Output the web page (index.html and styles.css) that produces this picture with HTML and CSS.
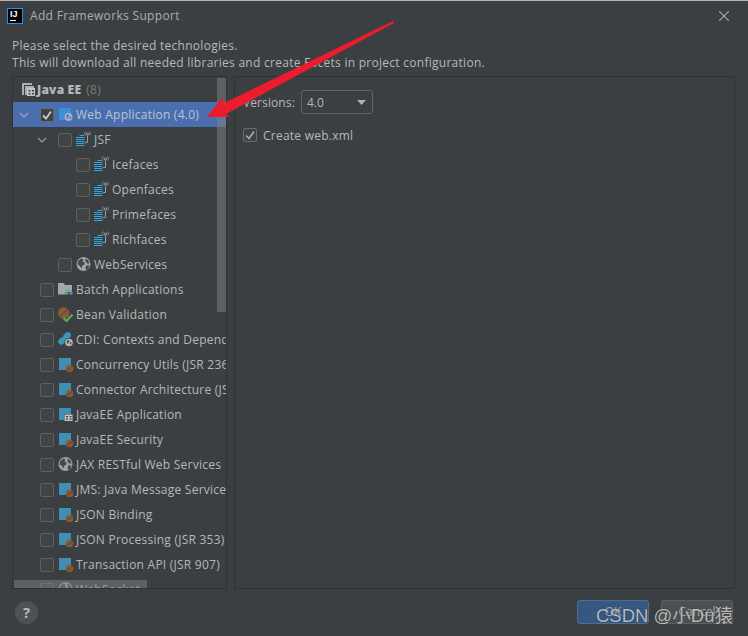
FILE: index.html
```html
<!DOCTYPE html>
<html lang="en">
<head>
<meta charset="utf-8">
<title>Add Frameworks Support</title>
<link rel="stylesheet" href="styles.css">
</head>
<body>
<svg class="defs" width="0" height="0" aria-hidden="true">
  <symbol id="jsf" viewBox="0 0 16 16">
    <path d="M0 6.500h8.500M0 8.500h8.500M0 10.500h8.500M0 12.500h8.500M0 14.500h8.500" stroke="#2fa7e0" stroke-width="1"/>
    <path d="M3.500 4.500h4.500" stroke="#2fa7e0" stroke-width="1"/>
    <path d="M11.500 4.500v7M11.500 11.500H9" fill="none" stroke="#a4a8aa" stroke-width=".9"/>
    <circle cx="11.500" cy="3" r="1.100" fill="none" stroke="#b0b4b6" stroke-width=".8"/>
    <path d="M9.300 4.500a3 3 0 0 1 0-4M13.700 4.500a3 3 0 0 0 0-4" fill="none" stroke="#9aa0a3" stroke-width=".8"/>
  </symbol>
  <symbol id="globe" viewBox="0 0 16 16">
    <circle cx="7.500" cy="8" r="7" fill="#9ea3a6"/>
    <path d="M2.500 4.500l3-2 2 1-1 2 2 1 0 2-2 1-1 3-2-3-2-1zM9.500 2.500l3 2 1 3-2 0-2-2zM10.500 9.500l3 0-1 3-2 2-1-3z" fill="#44484b"/>
  </symbol>
  <symbol id="bean" viewBox="0 0 16 16">
    <path d="M1 2h12v12H1z" fill="#3f8fb5"/>
    <circle cx="11.500" cy="12.500" r="3.800" fill="#8a5a32"/>
    <path d="M8.800 14.500l5.400-4" stroke="#3c3f41" stroke-width=".9"/>
  </symbol>
  <symbol id="appicon" viewBox="0 0 16 16">
    <path d="M1 2h12v12H1z" fill="#3f8fb5"/>
    <path d="M6 8h9v7.500H6z" fill="#3c3f41"/>
    <path d="M6.500 8.500h8V15h-8z" fill="#c2c6c8"/>
    <path d="M8 10h2v1.200H8zM11.500 10h2v1.200h-2zM8 12.500h2v1.200H8zM11.500 12.500h2v1.200h-2z" fill="#3c3f41"/>
  </symbol>
  <symbol id="webapp" viewBox="0 0 16 16">
    <path d="M1 2h12v12H1z" fill="#3a92d2"/>
    <circle cx="10.500" cy="11" r="4" fill="#9fb0c8"/>
    <path d="M8.500 9l2-.5 .5 1.500-1 1-.5 2-1-1.500zM12 10.500l1.300 .5-1 2-1-.5z" fill="#4b6eaf"/>
  </symbol>
  <symbol id="batch" viewBox="0 0 16 16">
    <path d="M0 2h5.500l1.500 2h7v5.500H7v4H0z" fill="#9ea9b0"/>
    <path d="M7 9.500h7V11H7z" fill="#9ea9b0"/>
    <circle cx="8.700" cy="12.200" r="1.700" fill="#57a55a"/>
    <circle cx="13" cy="12.200" r="1.700" fill="#3f93b8"/>
  </symbol>
  <symbol id="valid" viewBox="0 0 16 16">
    <circle cx="5.700" cy="7" r="5.800" fill="#8a5a32"/>
    <path d="M1.500 11L9.500 3" stroke="#3c3f41" stroke-width="1"/>
    <path d="M5.500 12l3 3 6-6.500" fill="none" stroke="#4fb14f" stroke-width="2.200"/>
  </symbol>
  <symbol id="cdi" viewBox="0 0 16 16">
    <ellipse cx="4" cy="10" rx="4" ry="3.200" fill="#3f93b8" transform="rotate(-40 4 10)"/>
    <ellipse cx="9" cy="5" rx="4.300" ry="3.200" fill="#3f93b8" transform="rotate(-40 9 5)"/>
    <circle cx="11" cy="11.500" r="4.500" fill="#3c3f41"/>
    <circle cx="11" cy="11.500" r="3.800" fill="#b4b8ba"/>
    <path d="M9 9.500l2-.5 .5 1.500-1 1-.5 2-1-1.500zM12.500 11l1.300 .5-1 2-1-.5z" fill="#44484b"/>
  </symbol>
  <symbol id="javaee" viewBox="0 0 16 16">
    <path d="M1 2h10v2H3v10H1z" fill="#a9afb2"/>
    <path d="M4 5h9v2H7v7H4z" fill="#a9afb2"/>
    <path d="M6 7h8v8H6z" fill="#c2c6c8"/>
    <path d="M7.500 9h2v1.500h-2zM11 9h2v1.500h-2zM7.500 12h2v1.500h-2zM11 12h2v1.500h-2z" fill="#3c3f41"/>
  </symbol>
</svg>

<main class="dialog">
  <header class="titlebar">
    <span class="logo"><span class="logo-text">IJ</span><span class="logo-bar"></span></span>
    <h1 class="title">Add Frameworks Support</h1>
    <svg class="close" width="10" height="10" viewBox="0 0 10 10"><path d="M0 0l10 10M10 0L0 10" stroke="#a9abad" stroke-width="1.100"/></svg>
  </header>

  <p class="intro">Please select the desired technologies.<br>This will download all needed libraries and create Facets in project configuration.</p>

  <div class="panels">
    <section class="tree-panel">
      <div class="tree">
        <div class="row group"><svg class="icon"><use href="#javaee"/></svg><strong>Java EE</strong><span class="count">(8)</span></div>

        <div class="row selected l1"><svg class="chev" viewBox="0 0 10 6"><path d="M1 1l4 4 4-4" fill="none" stroke="#9fa6b5" stroke-width="1.200"/></svg><span class="box on"><svg viewBox="0 0 12 12"><path d="M2 6.500l3 3 5-7" fill="none" stroke="#c8cacc" stroke-width="1.800"/></svg></span><svg class="icon"><use href="#webapp"/></svg><span class="label">Web Application (4.0)</span></div>

        <div class="row l2"><svg class="chev" viewBox="0 0 10 6"><path d="M1 1l4 4 4-4" fill="none" stroke="#9a9da0" stroke-width="1.200"/></svg><span class="box"></span><svg class="icon"><use href="#jsf"/></svg><span class="label">JSF</span></div>
        <div class="row l3"><span class="box"></span><svg class="icon"><use href="#jsf"/></svg><span class="label">Icefaces</span></div>
        <div class="row l3"><span class="box"></span><svg class="icon"><use href="#jsf"/></svg><span class="label">Openfaces</span></div>
        <div class="row l3"><span class="box"></span><svg class="icon"><use href="#jsf"/></svg><span class="label">Primefaces</span></div>
        <div class="row l3"><span class="box"></span><svg class="icon"><use href="#jsf"/></svg><span class="label">Richfaces</span></div>
        <div class="row l4"><span class="box"></span><svg class="icon"><use href="#globe"/></svg><span class="label">WebServices</span></div>

        <div class="row l5"><span class="box"></span><svg class="icon"><use href="#batch"/></svg><span class="label">Batch Applications</span></div>
        <div class="row l5"><span class="box"></span><svg class="icon"><use href="#valid"/></svg><span class="label">Bean Validation</span></div>
        <div class="row l5"><span class="box"></span><svg class="icon"><use href="#cdi"/></svg><span class="label">CDI: Contexts and Dependency Injection</span></div>
        <div class="row l5"><span class="box"></span><svg class="icon"><use href="#bean"/></svg><span class="label">Concurrency Utils (JSR 236)</span></div>
        <div class="row l5"><span class="box"></span><svg class="icon"><use href="#bean"/></svg><span class="label">Connector Architecture (JSR 322)</span></div>
        <div class="row l5"><span class="box"></span><svg class="icon"><use href="#appicon"/></svg><span class="label">JavaEE Application</span></div>
        <div class="row l5"><span class="box"></span><svg class="icon"><use href="#bean"/></svg><span class="label">JavaEE Security</span></div>
        <div class="row l5"><span class="box"></span><svg class="icon"><use href="#globe"/></svg><span class="label">JAX RESTful Web Services</span></div>
        <div class="row l5"><span class="box"></span><svg class="icon"><use href="#bean"/></svg><span class="label">JMS: Java Message Service</span></div>
        <div class="row l5"><span class="box"></span><svg class="icon"><use href="#bean"/></svg><span class="label">JSON Binding</span></div>
        <div class="row l5"><span class="box"></span><svg class="icon"><use href="#bean"/></svg><span class="label">JSON Processing (JSR 353)</span></div>
        <div class="row l5"><span class="box"></span><svg class="icon"><use href="#bean"/></svg><span class="label">Transaction API (JSR 907)</span></div>
        <div class="row l5"><span class="box"></span><svg class="icon"><use href="#globe"/></svg><span class="label">WebSocket</span></div>
      </div>
      <div class="vscroll"></div>
      <div class="hscroll"></div>
    </section>

    <section class="detail-panel">
      <div class="versions"><span class="versions-label">Versions:</span><span class="select"><span>4.0</span><svg class="caret" width="9" height="5" viewBox="0 0 9 5"><path d="M0 0h9L4.500 5z" fill="#afb1b3"/></svg></span></div>
      <div class="create"><span class="box on small"><svg viewBox="0 0 12 12"><path d="M2 6.500l3 3 5-7" fill="none" stroke="#a9abad" stroke-width="1.600"/></svg></span><span class="label">Create web.xml</span></div>
    </section>
  </div>

  <footer class="footer">
    <span class="help">?</span>
    <span class="buttons">
      <span class="btn primary">OK</span>
      <span class="btn">Cancel</span>
    </span>
  </footer>
</main>

<svg class="arrow" width="200" height="110" viewBox="200 15 200 110" aria-hidden="true">
  <path d="M207 117 L222 98 L224 103 L393 21 L394 23 L226 114 L230 117z" fill="#ec1c2e"/>
</svg>
<span class="watermark">CSDN @小Du猿</span>
</body>
</html>
```
FILE: styles.css
```css
* { box-sizing: border-box; }
html, body { margin: 0; height: 100%; }
body {
  position: relative;
  width: 748px;
  height: 636px;
  overflow: hidden;
  background: #3c3f41;
  color: #bbbbbb;
  font-family: "Open Sans", "Liberation Sans", sans-serif;
  font-size: 13px;
}
.defs { position: absolute; }
.dialog {
  height: 636px;
  display: flex;
  flex-direction: column;
  border-top: 1px solid #b5b5b5;
}
.titlebar {
  display: flex;
  align-items: center;
  height: 29px;
  padding: 0 19px 0 7px;
  flex: none;
}
.logo {
  position: relative;
  width: 16px;
  height: 16px;
  background: #000;
  border: 1px solid #2f8fe8;
  flex: none;
  color: #fff;
  margin-right: 7px;
}
.logo-text {
  position: absolute;
  left: 2px;
  top: 0;
  font: bold 9px/10px "Liberation Sans", sans-serif;
}
.logo-bar {
  position: absolute;
  left: 2px;
  bottom: 2px;
  width: 6px;
  height: 1px;
  background: #fff;
}
.title {
  margin: 0;
  flex: 1;
  font-size: 12px;
  font-weight: 400;
  color: #a9adb0;
  letter-spacing: .33px;
}
.close { flex: none; }
.intro {
  margin: 7px 0 0;
  padding-left: 12px;
  line-height: 17px;
  font-size: 12px;
  letter-spacing: .27px;
  color: #b5b8ba;
  height: 39px;
  flex: none;
}
.panels {
  display: flex;
  gap: 7px;
  padding: 0 13px 0 12px;
  height: 513px;
  flex: none;
}
.tree-panel, .detail-panel {
  position: relative;
  border: 1px solid #323232;
  height: 513px;
}
.tree-panel { width: 215px; overflow: hidden; }
.detail-panel { flex: 1; padding: 13px 0 0 8px; }
.tree { width: 214px; overflow: hidden; }
.row {
  height: 25px;
  display: flex;
  align-items: center;
  white-space: nowrap;
  font-size: 12px;
  color: #b4b8bb;
}
.label { letter-spacing: .24px; }
.row.group { padding-left: 8px; font-weight: 700; }
.row.group strong { margin-right: 5px; color: #b4b8bb; letter-spacing: .2px; }
.count { color: #787878; font-weight: 400; letter-spacing: .3px; }
.row.selected { background: #4b6eaf; color: #bbc4d4; }
.l1 { padding-left: 8px; }
.l2 { padding-left: 26px; }
.l3 { padding-left: 63px; }
.l4 { padding-left: 45px; }
.l5 { padding-left: 27px; }
.icon { width: 16px; height: 16px; margin: -1px 2px 0 0; flex: none; }
.group .icon { margin-right: 0; }
.chev { width: 10px; height: 6px; flex: none; margin: 0 11px 0 -2px; }
.box {
  width: 14px;
  height: 14px;
  flex: none;
  margin-right: 4px;
  border: 1px solid #5e6060;
  border-radius: 2px;
  background: #404445;
  display: inline-flex;
}
.box.on { background: #3f4244; border-color: #6b6b6b; }
.box svg { width: 12px; height: 12px; }
.vscroll {
  position: absolute;
  left: 204px;
  top: 1px;
  width: 9px;
  height: 234px;
  background: rgba(130, 130, 130, .5);
}
.hscroll {
  position: absolute;
  left: 1px;
  top: 503px;
  width: 133px;
  height: 9px;
  background: rgba(130, 130, 130, .5);
}
.versions { display: flex; align-items: center; height: 24px; font-size: 12px; color: #b4b8bb; letter-spacing: .1px; }
.versions-label { margin-right: 6px; }
.select {
  width: 72px;
  height: 24px;
  border: 1px solid #646464;
  border-radius: 3px;
  display: flex;
  align-items: center;
  justify-content: space-between;
  padding: 0 6px 0 5px;
  background: #3c3f41;
}
.create { display: flex; align-items: center; margin-top: 9px; height: 24px; font-size: 12px; color: #b4b8bb; }
.box.small { margin-right: 6px; }
.footer {
  display: flex;
  justify-content: space-between;
  padding: 11px 15px 0 15px;
  flex: 1;
  align-items: flex-start;
}
.help {
  width: 23px;
  height: 23px;
  border-radius: 50%;
  background: #4e5254;
  color: #bbb;
  font: 700 15px/23px "Open Sans", sans-serif;
  text-align: center;
  margin-top: 1px;
}
.buttons { display: flex; gap: 12px; }
.btn {
  width: 72px;
  height: 24px;
  border: 1px solid #5e6060;
  border-radius: 3px;
  background: #4b5052;
  color: #a5a9ab;
  font-size: 12px;
  line-height: 22px;
  text-align: center;
}
.primary { background: #365880; border-color: #4c708c; }
.arrow { position: absolute; left: 200px; top: 15px; }
.watermark {
  position: absolute;
  left: 596px;
  top: 604px;
  font: 18.5px/24px "Liberation Sans", "Noto Sans CJK SC", sans-serif;
  color: #c9cccf;
  opacity: .85;
  white-space: nowrap;
  text-shadow: 0 0 1px #222;
}
```
